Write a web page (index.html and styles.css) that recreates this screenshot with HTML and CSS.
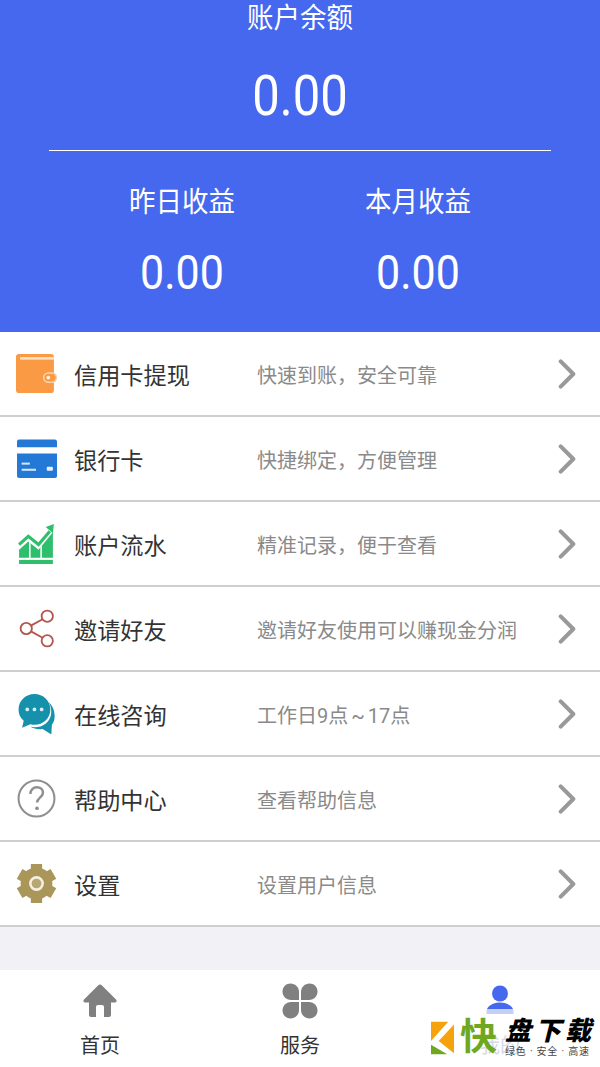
FILE: index.html
```html
<!DOCTYPE html>
<html lang="zh-CN">
<head>
  <meta charset="UTF-8" />
  <title>账户</title>
  <link rel="stylesheet" href="styles.css">
</head>
<body>

<div class="page">
  <header class="balance">
    <div class="balance-title">账户余额</div>
    <div class="balance-total">0.00</div>
    <div class="balance-line"></div>
    <div class="balance-cols">
      <div class="balance-col">
        <div class="balance-label">昨日收益</div>
        <div class="balance-num">0.00</div>
      </div>
      <div class="balance-col">
        <div class="balance-label">本月收益</div>
        <div class="balance-num">0.00</div>
      </div>
    </div>
  </header>

  <ul class="menu">
    <li class="menu-row">
      <svg class="menu-icon" viewBox="0 0 40 40">
        <rect x="0" y="1" width="37" height="38" rx="3" fill="#fb9a45"/>
        <rect x="4" y="4" width="33" height="2.500" fill="#fde2c8"/>
        <rect x="27" y="19.500" width="12.500" height="9" rx="4.500" fill="#fb9a45" stroke="#f8d3ac" stroke-width="1.500"/>
        <circle cx="31.500" cy="24" r="1.800" fill="#fdf0e2"/>
      </svg>
      <span class="menu-name">信用卡提现</span>
      <span class="menu-desc">快速到账，安全可靠</span>
      <svg class="menu-arrow" viewBox="0 0 20 34"><path d="M3 3l14 14L3 31" /></svg>
    </li>
    <li class="menu-row">
      <svg class="menu-icon" viewBox="0 0 40 40">
        <path d="M1 3.500a2 2 0 0 1 2-2h35a2 2 0 0 1 2 2V9H1z" fill="#2479d6"/>
        <path d="M1 15h39v22a2 2 0 0 1-2 2H3a2 2 0 0 1-2-2z" fill="#2479d6"/>
        <rect x="5.500" y="24" width="8" height="2" fill="#d5e6f8"/>
        <rect x="5.500" y="30" width="14" height="2" fill="#d5e6f8"/>
        <rect x="30" y="28" width="6" height="4" rx="1" fill="#e6f0fb"/>
      </svg>
      <span class="menu-name">银行卡</span>
      <span class="menu-desc">快捷绑定，方便管理</span>
      <svg class="menu-arrow" viewBox="0 0 20 34"><path d="M3 3l14 14L3 31" /></svg>
    </li>
    <li class="menu-row">
      <svg class="menu-icon" viewBox="0 0 40 40">
        <path d="M3 21l9-8 10 8 11-13" fill="none" stroke="#2fbf6c" stroke-width="3"/>
        <path d="M29 4l8-3-1 9z" fill="#2fbf6c"/>
        <path d="M3 26l9-8 10 8 14-17v25H3z" fill="#2fbf6c"/>
        <path d="M13.500 18v17M24.500 22v13" stroke="#fff" stroke-width="1.500"/>
        <rect x="3" y="36" width="33" height="4" fill="#2fbf6c"/>
      </svg>
      <span class="menu-name">账户流水</span>
      <span class="menu-desc">精准记录，便于查看</span>
      <svg class="menu-arrow" viewBox="0 0 20 34"><path d="M3 3l14 14L3 31" /></svg>
    </li>
    <li class="menu-row">
      <svg class="menu-icon" viewBox="0 0 40 40">
        <g fill="none" stroke="#b3564e" stroke-width="1.800">
          <circle cx="10" cy="20" r="5.500"/>
          <circle cx="30.500" cy="8" r="5.500"/>
          <circle cx="30.500" cy="32" r="5.500"/>
          <path d="M15 17l11-6M15 23l11 6"/>
        </g>
      </svg>
      <span class="menu-name">邀请好友</span>
      <span class="menu-desc">邀请好友使用可以赚现金分润</span>
      <svg class="menu-arrow" viewBox="0 0 20 34"><path d="M3 3l14 14L3 31" /></svg>
    </li>
    <li class="menu-row">
      <svg class="menu-icon" viewBox="0 0 40 40">
        <path d="M32 9C39 15 39 27 35 31L34.500 40.500 26 35C22 36 18 35 14 33 24 35 32 30 34 22 35 17 34 13 32 9Z" fill="#1591ab"/>
        <path d="M18 1c8.500 0 15.500 6.500 15.500 15S26.500 31 18 31c-1.500 0-2.500 0-4-.500L6 34l1.500-7C4 24 2.500 20.500 2.500 16 2.500 7.500 9.500 1 18 1z" fill="#1591ab"/>
        <circle cx="11" cy="16" r="1.800" fill="#d7eef3"/>
        <circle cx="18" cy="16" r="1.800" fill="#d7eef3"/>
        <circle cx="25" cy="16" r="1.800" fill="#d7eef3"/>
      </svg>
      <span class="menu-name">在线咨询</span>
      <span class="menu-desc menu-desc-hours">工作日9点 ~ 17点</span>
      <svg class="menu-arrow" viewBox="0 0 20 34"><path d="M3 3l14 14L3 31" /></svg>
    </li>
    <li class="menu-row">
      <svg class="menu-icon" viewBox="0 0 40 40">
        <circle cx="20" cy="20" r="17.500" fill="none" stroke="#8f8f8f" stroke-width="2"/>
        <path d="M14 15.500c0-4 3-6.500 6.300-6.500 3.500 0 6 2.300 6 5.300 0 4.500-5.700 4.700-5.700 9.700" fill="none" stroke="#8f8f8f" stroke-width="2.400"/>
        <circle cx="20.500" cy="29.500" r="1.800" fill="#8f8f8f"/>
      </svg>
      <span class="menu-name">帮助中心</span>
      <span class="menu-desc">查看帮助信息</span>
      <svg class="menu-arrow" viewBox="0 0 20 34"><path d="M3 3l14 14L3 31" /></svg>
    </li>
    <li class="menu-row">
      <svg class="menu-icon" viewBox="0 0 40 40">
        <path d="M20 20V1M20 20v19M20 20l16.500-9.500M20 20l16.500 9.500M20 20L3.500 10.500M20 20L3.500 29.500" stroke="#ab9659" stroke-width="11"/>
        <circle cx="20" cy="20" r="15.500" fill="#ab9659"/>
        <circle cx="20" cy="20" r="6" fill="#b8a673" stroke="#f5f0df" stroke-width="2.500"/>
      </svg>
      <span class="menu-name">设置</span>
      <span class="menu-desc">设置用户信息</span>
      <svg class="menu-arrow" viewBox="0 0 20 34"><path d="M3 3l14 14L3 31" /></svg>
    </li>
  </ul>

  <div class="spacer"></div>

  <nav class="tabbar">
    <div class="tab">
      <svg class="tab-icon" viewBox="0 0 36 36">
        <path d="M18 1.500c.8 0 1.300.4 2 1l14 14c1.200 1.300.5 3-1 3h-4V32a2 2 0 0 1-2 2h-5V24a2 2 0 0 0-2-2h-4a2 2 0 0 0-2 2v10H9a2 2 0 0 1-2-2V19.500H3c-1.500 0-2.200-1.700-1-3l14-14c.7-.6 1.200-1 2-1z" fill="#808080"/>
      </svg>
      <span class="tab-name">首页</span>
    </div>
    <div class="tab">
      <svg class="tab-icon" viewBox="0 0 36 36">
        <g fill="#808080">
          <path d="M17 17H9C4 17 .5 13 .5 8.500S4 .5 8.500.5 17 4 17 9z"/>
          <path d="M19 17h8c5 0 8.500-4 8.500-8.500S32 .5 27.500.5 19 4 19 9z"/>
          <path d="M17 19H9c-5 0-8.500 4-8.500 8.500s3.500 8 8 8S17 32 17 27z"/>
          <path d="M19 19h8c5 0 8.500 4 8.500 8.500s-3.500 8-8 8S19 32 19 27z"/>
        </g>
      </svg>
      <span class="tab-name">服务</span>
    </div>
    <div class="tab tab-on">
      <svg class="tab-icon" viewBox="0 0 36 36">
        <circle cx="18" cy="10.500" r="8" fill="#4668ee"/>
        <path d="M5 26c2-4 7-6.500 13-6.500S29 22 31 26z" fill="#4668ee"/>
        <path d="M5 26h26c.5 1.500.5 3 .5 5h-27c0-2 0-3.500.5-5z" fill="#c5cff3"/>
      </svg>
      <span class="tab-name">我的</span>
    </div>
  </nav>

  <div class="mark">
    <svg class="mark-tile" viewBox="0 0 24 34">
      <path d="M0 0h18L0 20z" fill="#f5a20c"/>
      <path d="M24 3v30L8 20z" fill="#f5a20c"/>
      <path d="M0 24v10h17z" fill="#6fa81e"/>
    </svg>
    <span class="mark-kuai">快</span>
    <div class="mark-text">
      <div class="mark-name">盘下载</div>
      <div class="mark-sub">绿色 · 安全 · 高速</div>
    </div>
  </div>
</div>

</body>
</html>
```

FILE: styles.css
```css
* {
  box-sizing: border-box;
}

body {
  margin: 0;
  font-family: Roboto, "Noto Sans CJK SC", sans-serif;
  background: white;
}

.page {
  position: relative;
  width: 600px;
  height: 1067px;
  overflow: hidden;
  display: flex;
  flex-direction: column;
}

/* top blue block */
.balance {
  height: 332px;
  background: #4668ee;
  color: white;
  text-align: center;
  flex-shrink: 0;
}

.balance-title {
  font-size: 26.500px;
  line-height: 36px;
  transform: scaleY(1.08);
}

.balance-total {
  font-size: 49px;
  line-height: 60px;
  margin-top: 31px;
  transform: scaleY(1.14);
}

.balance-line {
  height: 1px;
  background: white;
  margin: 23px 49px 0;
}

.balance-cols {
  display: grid;
  grid-template-columns: 236px 236px;
  justify-content: center;
  margin-top: 31px;
}

.balance-label {
  font-size: 26.500px;
  line-height: 40px;
  transform: scaleY(1.08);
}

.balance-num {
  font-size: 43px;
  line-height: 52px;
  margin-top: 25px;
  transform: scaleY(1.1);
}

/* rows */
.menu {
  list-style: none;
  margin: 0;
  padding: 0;
  background: white;
}

.menu-row {
  height: 85px;
  display: flex;
  align-items: center;
  padding: 0 24px 0 16px;
  border-bottom: 2px solid #cfcfcf;
}

.menu-icon {
  width: 41px;
  height: 41px;
  flex-shrink: 0;
}

.menu-name {
  width: 183px;
  margin-left: 17px;
  font-size: 23.200px;
  color: #333;
}

.menu-desc {
  flex: 1;
  padding-top: 2px;
  font-size: 20px;
  color: #8a8a8a;
}

.menu-desc-hours {
  word-spacing: -2px;
}

.menu-arrow {
  width: 18px;
  height: 32px;
  fill: none;
  stroke: #999;
  stroke-width: 4.500;
  stroke-linecap: round;
  stroke-linejoin: round;
}

.spacer {
  flex: 1;
  background: #f2f2f6;
}

/* bottom nav */
.tabbar {
  height: 97px;
  flex-shrink: 0;
  display: grid;
  grid-template-columns: repeat(3, 1fr);
  background: white;
}

.tab {
  display: flex;
  flex-direction: column;
  align-items: center;
  padding-top: 13px;
}

.tab-icon {
  width: 36px;
  height: 36px;
}

.tab-name {
  margin-top: 12px;
  font-size: 20px;
  line-height: 30px;
  color: #333;
}

.tab-on .tab-name {
  color: #d5d9e6;
}

/* watermark over the last tab */
.mark {
  position: absolute;
  left: 431px;
  top: 1018px;
  display: flex;
  align-items: center;
}

.mark-tile {
  width: 23px;
  height: 34px;
}

.mark-kuai {
  width: 38px;
  margin-left: 6px;
  font-size: 37px;
  line-height: 40px;
  color: #6fa81e;
  font-weight: 700;
}

.mark-text {
  margin-left: 7px;
}

.mark-name {
  font-size: 26px;
  line-height: 27px;
  font-weight: 900;
  font-style: italic;
  letter-spacing: 4px;
  color: black;
  white-space: nowrap;
}

.mark-sub {
  margin-top: 1px;
  font-size: 10px;
  line-height: 12px;
  letter-spacing: 0.800px;
  color: #444;
  white-space: nowrap;
}
```
